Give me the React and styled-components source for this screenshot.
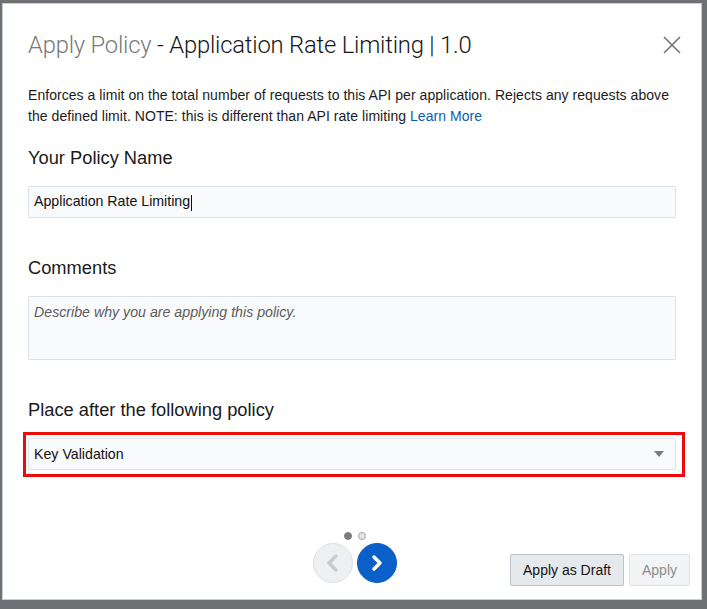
import React from "react";
import styled, { createGlobalStyle } from "styled-components";

const Global = createGlobalStyle`
  html, body { margin: 0; padding: 0; }
  body { background: #6e7073; font-family: "Liberation Sans", Arial, sans-serif; }
`;

const Backdrop = styled.div`
  width: 707px;
  height: 609px;
  padding: 3px 5px 8px 2px;
  box-sizing: border-box;
  background: #6e7073;
`;

const Modal = styled.div`
  background: #fff;
  height: 597px;
  box-sizing: border-box;
  border: 1px solid #c9ced3;
  padding: 21px 25px 0 25px;
  display: flex;
  flex-direction: column;
`;

const Header = styled.div`
  display: flex;
  justify-content: space-between;
  align-items: center;
  height: 40px;
`;

const Title = styled.h1`
  margin: 0;
  font-family: Roboto, "Liberation Sans", sans-serif;
  font-weight: 300;
  font-size: 23.8px;
  color: #161616;
  letter-spacing: -0.2px;
`;

const Muted = styled.span`
  color: #7a7a7a;
`;

const Close = styled.button`
  border: 0;
  background: none;
  padding: 0;
  width: 18px;
  height: 18px;
  margin-right: -5px;
  display: flex;
`;

const Desc = styled.p`
  margin: 20px 0 0;
  font-size: 14px;
  letter-spacing: 0.05px;
  line-height: 21px;
  color: #1c1c1c;
`;

const Link = styled.a`
  color: #0b5cad;
  text-decoration: none;
`;

const Label = styled.div`
  font-size: 18.3px;
  color: #1a1a1a;
  margin-top: ${(p) => p.$mt}px;
  line-height: 20px;
`;

const Field = styled.div`
  margin-top: ${(p) => p.$mt ?? 18}px;
  height: ${(p) => p.$h}px;
  box-sizing: border-box;
  border: 1px solid #dde2e6;
  border-radius: 2px;
  background: #f9fafb;
  font-size: 14.2px;
  color: #111;
  padding: 0 8px 0 5px;
  display: flex;
  align-items: ${(p) => (p.$top ? "flex-start" : "center")};
  padding-top: ${(p) => (p.$top ? 7 : 0)}px;
  justify-content: space-between;
`;

const Placeholder = styled.span`
  font-style: italic;
  color: #5c5c5c;
`;

const Caret = styled.span`
  display: inline-block;
  width: 1px;
  height: 16px;
  background: #111;
  vertical-align: middle;
  margin-left: 1px;
`;

const Highlight = styled.div`
  margin: 12px -9px 0 -5px;
  border: 3px solid #ec0a0a;
  padding: 3px 6px 4px 2px;
`;

const Arrow = styled.span`
  width: 0;
  height: 0;
  border-left: 5px solid transparent;
  border-right: 5px solid transparent;
  border-top: 6px solid #7b7b7b;
  margin-right: 3px;
`;

const Footer = styled.div`
  margin-top: auto;
  height: 85px;
  position: relative;
  display: flex;
  justify-content: flex-end;
  align-items: flex-end;
  padding-bottom: 13px;
  box-sizing: border-box;
`;

const Nav = styled.div`
  position: absolute;
  left: 285px;
  bottom: 16px;
  display: flex;
  flex-direction: column;
  align-items: center;
`;

const Dots = styled.div`
  display: flex;
  gap: 6px;
  margin-bottom: 3px;
`;

const Dot = styled.span`
  width: 8px;
  height: 8px;
  border-radius: 50%;
  box-sizing: border-box;
  background: ${(p) => (p.$on ? "#7c7c7c" : "#e4e4e4")};
  border: 1px solid ${(p) => (p.$on ? "#7c7c7c" : "#a8a8a8")};
`;

const Circles = styled.div`
  display: flex;
  gap: 4px;
`;

const Circle = styled.button`
  width: 40px;
  height: 40px;
  border-radius: 50%;
  padding: 0;
  display: flex;
  align-items: center;
  justify-content: center;
  box-sizing: border-box;
  background: ${(p) => (p.$primary ? "#0a5fc8" : "#eef0f2")};
  border: 1px solid ${(p) => (p.$primary ? "#0a5fc8" : "#dcdfe2")};
`;

const Buttons = styled.div`
  display: flex;
  gap: 5px;
  margin-right: -14px;
`;

const Btn = styled.button`
  height: 32px;
  box-sizing: border-box;
  padding: 0 12px;
  font-family: "Liberation Sans", Arial, sans-serif;
  font-size: 14px;
  border-radius: 2px;
  color: ${(p) => (p.$disabled ? "#8d8d8d" : "#141414")};
  background: ${(p) => (p.$disabled ? "#f2f4f5" : "#e6e9ec")};
  border: 1px solid ${(p) => (p.$disabled ? "#dfe3e6" : "#b7c1ca")};
`;

export default function App() {
  return (
    <>
      <Global />
      <Backdrop>
        <Modal>
          <Header>
            <Title>
              <Muted>Apply Policy</Muted> - Application Rate Limiting | 1.0
            </Title>
            <Close aria-label="Close">
              <svg width="18" height="18" viewBox="0 0 18 18">
                <path d="M1 1L17 17M17 1L1 17" stroke="#6f6f6f" strokeWidth="1.5" fill="none" />
              </svg>
            </Close>
          </Header>
          <Desc>
            Enforces a limit on the total number of requests to this API per application. Rejects any requests above
            the defined limit. NOTE: this is different than API rate limiting <Link href="#">Learn More</Link>
          </Desc>
          <Label $mt={21}>Your Policy Name</Label>
          <Field $h={32}>
            <span>
              Application Rate Limiting<Caret />
            </span>
          </Field>
          <Label $mt={40}>Comments</Label>
          <Field $h={64} $top>
            <Placeholder>Describe why you are applying this policy.</Placeholder>
          </Field>
          <Label $mt={40}>Place after the following policy</Label>
          <Highlight>
            <Field $h={32} $mt={0}>
              <span>Key Validation</span>
              <Arrow />
            </Field>
          </Highlight>
          <Footer>
            <Nav>
              <Dots>
                <Dot $on />
                <Dot />
              </Dots>
              <Circles>
                <Circle aria-label="Previous">
                  <svg width="16" height="20" viewBox="0 0 16 20">
                    <path d="M11 3L4 10L11 17" stroke="#c9cccf" strokeWidth="3.5" fill="none" strokeLinecap="round" strokeLinejoin="round" />
                  </svg>
                </Circle>
                <Circle $primary aria-label="Next">
                  <svg width="16" height="20" viewBox="0 0 16 20">
                    <path d="M5 4L11 10L5 16" stroke="#fff" strokeWidth="3.5" fill="none" strokeLinecap="round" strokeLinejoin="round" />
                  </svg>
                </Circle>
              </Circles>
            </Nav>
            <Buttons>
              <Btn>Apply as Draft</Btn>
              <Btn $disabled>Apply</Btn>
            </Buttons>
          </Footer>
        </Modal>
      </Backdrop>
    </>
  );
}
